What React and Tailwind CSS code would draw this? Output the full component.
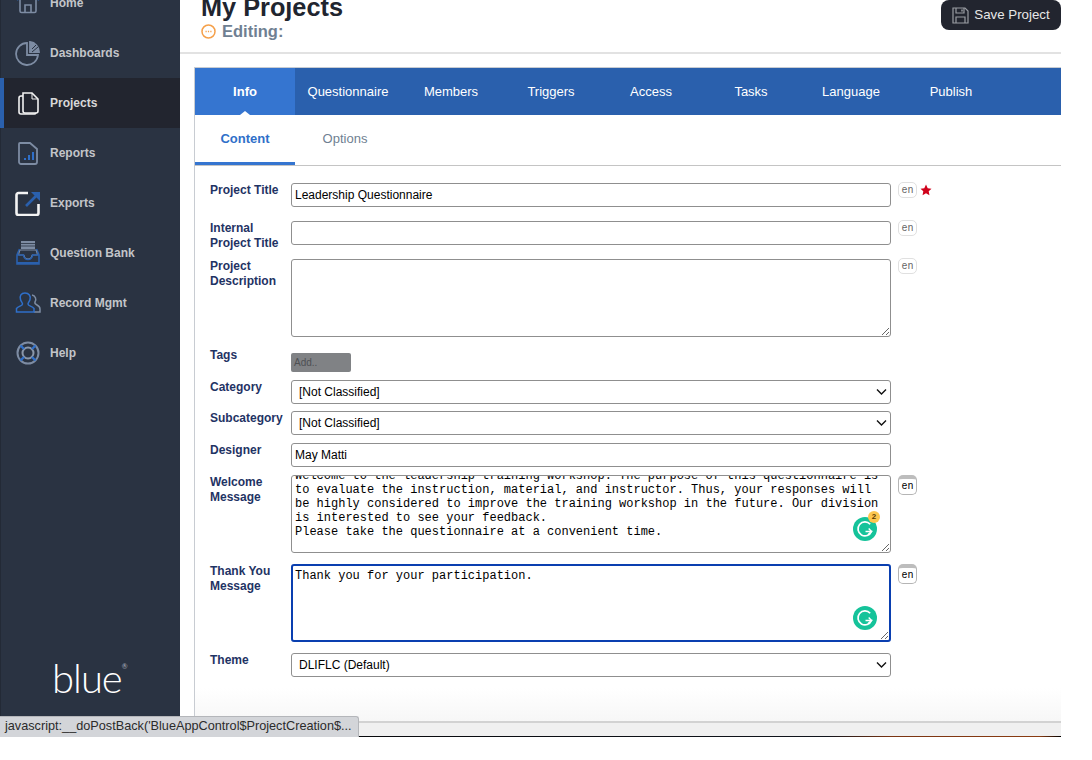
import React, { useEffect, useRef } from "react";

const sans = "font-['Liberation_Sans',Arial,sans-serif]";

const HomeIcon = () => (
  <svg width="26" height="26" viewBox="0 0 26 26" fill="none" strokeWidth="1.6">
    <path d="M2 10 13 1l11 9" stroke="#2a60ad" strokeWidth="2" />
    <path d="M5 8v13a1.500 1.500 0 0 0 1.500 1.500h13A1.500 1.500 0 0 0 21 21V8" stroke="#7d8ca3" />
    <path d="M10 22v-7h6v7" stroke="#7d8ca3" />
  </svg>
);

const DashIcon = () => (
  <svg width="26" height="26" viewBox="0 0 26 26" fill="none" stroke="#7d8ca3" strokeWidth="1.8">
    <path d="M12 3a11 11 0 1 0 11 12H12z" />
    <path d="M15 2a10 10 0 0 1 9 10h-9z" fill="#7d8ca3" />
    <path d="m17 9 4-4M17 12l6-5" stroke="#2a3342" strokeWidth="1" />
  </svg>
);

const ProjectsIcon = () => (
  <svg width="26" height="26" viewBox="0 0 26 26" fill="none" stroke="#f2f2f2" strokeWidth="1.6">
    <path d="M8 3h9l6 6v12a2 2 0 0 1-2 2H10a2 2 0 0 1-2-2z" />
    <path d="M8 6H6a2 2 0 0 0-2 2v14a2 2 0 0 0 2 2h13a2 2 0 0 0 2-1" />
    <path d="M17 3v6h6" strokeWidth="1" />
  </svg>
);

const ReportsIcon = () => (
  <svg width="26" height="26" viewBox="0 0 26 26" fill="none">
    <path d="M5 3h10l7 6v13a2 2 0 0 1-2 2H6a2 2 0 0 1-2-2V4a1 1 0 0 1 1-1z" stroke="#7d8ca3" strokeWidth="1.8" />
    <path d="M9 20h2v-2H9zM13 20h2v-5h-2zM17 20h2v-8h-2z" fill="#2f6fc9" />
  </svg>
);

const ExportsIcon = () => (
  <svg width="26" height="26" viewBox="0 0 26 26" fill="none">
    <path d="M13 3H3.500a2 2 0 0 0-2 2v18a2 2 0 0 0 2 2h18a2 2 0 0 0 2-2V14" stroke="#f4f4f4" strokeWidth="2.600" />
    <path d="m11 16 10-10" stroke="#2a60ad" strokeWidth="2.600" />
    <path d="M16 2h9v9z" fill="#2a60ad" />
  </svg>
);

const BankIcon = () => (
  <svg width="26" height="26" viewBox="0 0 26 26" fill="none">
    <path d="M6 1h14v8H6z" fill="#7d8ca3" />
    <path d="M6 3.500h14M6 6h14" stroke="#2a3342" strokeWidth="0.800" />
    <path d="M4.500 9 2 15v9h22v-9l-2.500-6" stroke="#2a60ad" strokeWidth="1.600" />
    <path d="M5 10h16l1.500 5H17a4 4 0 0 1-8 0H3.500z" fill="#2a3342" stroke="#7d8ca3" strokeWidth="1" />
    <path d="M2 15h6.500a4.500 4.500 0 0 0 9 0H24" stroke="#2a60ad" strokeWidth="1.600" />
    <path d="M2 22h22v2H2z" fill="#2a60ad" />
  </svg>
);

const RecordIcon = () => (
  <svg width="26" height="22" viewBox="0 0 26 22" fill="none" strokeWidth="1.500">
    <path d="M17 3a4.500 4.500 0 0 1 3 7c-.6 1.500 0 2 2 3 2 1 3 2 3 4v3h-6" stroke="#7d8ca3" />
    <path d="M10 1c4 0 6 3 5 6.500-.4 2-2 3-2 4.500 0 2 4 2 6 4.500V20H1.500v-3.500c2-2.500 6-2.500 6-4.500 0-1.500-1.600-2.500-2-4.500C4.500 4 6 1 10 1z" stroke="#2f6fc9" />
  </svg>
);

const HelpIcon = () => (
  <svg width="26" height="26" viewBox="0 0 26 26" fill="none">
    <circle cx="13" cy="13" r="10.500" stroke="#7d8ca3" strokeWidth="2" />
    <circle cx="13" cy="13" r="5.500" stroke="#8b98ab" strokeWidth="2" />
    <path d="m5.500 5.500 3.500 3.500M20.500 5.500 17 9M5.500 20.500 9 17M20.500 20.500 17 17" stroke="#2f6fc9" strokeWidth="2.400" />
  </svg>
);

const navItems = [
  { label: "Home", icon: HomeIcon },
  { label: "Dashboards", icon: DashIcon },
  { label: "Projects", icon: ProjectsIcon, active: true },
  { label: "Reports", icon: ReportsIcon },
  { label: "Exports", icon: ExportsIcon },
  { label: "Question Bank", icon: BankIcon },
  { label: "Record Mgmt", icon: RecordIcon },
  { label: "Help", icon: HelpIcon },
];

const tabs = [
  { label: "Info", width: "w-[100px]", active: true },
  { label: "Questionnaire", width: "w-[106px]" },
  { label: "Members", width: "w-[100px]" },
  { label: "Triggers", width: "w-[100px]" },
  { label: "Access", width: "w-[100px]" },
  { label: "Tasks", width: "w-[100px]" },
  { label: "Language", width: "w-[100px]" },
  { label: "Publish", width: "w-[100px]" },
];

const fieldClass =
  "block w-[600px] h-6 rounded-[3px] border border-[#8f8f8f] bg-white px-[3px] text-xs text-black outline-none";

const Sidebar = () => (
  <aside className="flex w-[180px] shrink-0 flex-col overflow-hidden bg-[#2a3342] shadow-[inset_1px_0_0_#232a36]">
    <nav className="-mt-[22px]">
      {navItems.map((item) => (
        <div
          key={item.label}
          className={
            item.active
              ? "flex h-[50px] items-center border-l-4 border-[#2a60ad] bg-[#22252f] pl-[11px]"
              : "flex h-[50px] items-center pl-[15px]"
          }
        >
          <span className="flex w-[35px] shrink-0">
            <item.icon />
          </span>
          <span className={item.active ? "text-xs font-bold text-[#d8d8d8]" : "text-xs font-bold text-[#c3c5c9]"}>
            {item.label}
          </span>
        </div>
      ))}
    </nav>
    <div className="mt-[276px] flex items-start pl-[52px] font-['Lato',sans-serif] text-[40px] leading-[48px] font-light tracking-[-1px] text-white">
      blue
      <span className="mt-[9px] text-[7px] leading-none font-normal text-[#aab0ba]">®</span>
    </div>
  </aside>
);

const LangBadge = ({ strong }) =>
  strong ? (
    <span className="ml-[7px] flex h-5 w-[19px] items-center justify-center rounded-[5px] border border-[#b5b5b5] border-t-[4px] border-t-[#bdbdbd] bg-white font-['Liberation_Mono',monospace] text-[10px] text-black">
      en
    </span>
  ) : (
    <span className="-mt-[1px] ml-[7px] flex h-4 w-[19px] items-center justify-center rounded-[5px] border border-[#e0e0e0] bg-white font-['Liberation_Mono',monospace] text-[10px] text-[#666]">
      en
    </span>
  );

const Row = ({ label, className, labelClass = "h-6", children }) => (
  <div className={`flex ${className}`}>
    <label className={`w-[81px] shrink-0 text-xs leading-[14.5px] font-bold text-[#1f3364] ${labelClass}`}>
      {label}
    </label>
    {children}
  </div>
);

const Chevron = () => (
  <svg
    className="pointer-events-none absolute top-[8px] right-[4px]"
    width="11"
    height="8"
    viewBox="0 0 11 8"
    fill="none"
    stroke="#111"
    strokeWidth="1.400"
  >
    <path d="m1 1.500 4.500 4.500L10 1.500" />
  </svg>
);

const SelectField = ({ value }) => (
  <div className="relative w-[600px]">
    <select className={`${fieldClass} appearance-none pl-[7px]`} defaultValue={value}>
      <option>{value}</option>
    </select>
    <Chevron />
  </div>
);

const GrammarlyBadge = ({ count }) => (
  <div className="pointer-events-none absolute right-[14px] bottom-[12px] h-6 w-6">
    <svg width="24" height="24" viewBox="0 0 24 24" fill="none">
      <circle cx="12" cy="12" r="12" fill="#15c39a" />
      <path d="M17.200 7.200A7 7 0 1 0 18.500 14.500H12.500" stroke="#fff" strokeWidth="1.700" />
      <path d="m15.200 17.500 3.300-3-2.800-3" stroke="#fff" strokeWidth="1.400" />
    </svg>
    {count && (
      <span className="absolute -top-[6px] -right-[3px] flex h-3 w-3 items-center justify-center rounded-full bg-[#fdc74f] text-[8px] font-bold text-[#5b3a00]">
        {count}
      </span>
    )}
  </div>
);

const welcomeText = `Welcome to the leadership training workshop. The purpose of this questionnaire is to evaluate the instruction, material, and instructor. Thus, your responses will be highly considered to improve the training workshop in the future. Our division is interested to see your feedback.
Please take the questionnaire at a convenient time.


`;

const Area = ({ value, focused, scrollTo, count, grammarly, height = "h-[78px]" }) => {
  const ref = useRef(null);
  useEffect(() => {
    if (scrollTo) ref.current.scrollTop = scrollTo;
  }, [scrollTo]);
  return (
    <div className={`relative w-[600px] ${height}`}>
      <textarea
        ref={ref}
        defaultValue={value}
        className={
          focused
            ? "block h-full w-full resize-y overflow-hidden rounded-[3px] border-2 border-[#0a3fb0] bg-white px-[2px] py-[3px] font-['Liberation_Mono',monospace] text-xs leading-[14px] text-black outline-none"
            : "block h-full w-full resize-y overflow-hidden rounded-[3px] border border-[#8f8f8f] bg-white px-[3px] py-[3px] font-['Liberation_Mono',monospace] text-xs leading-[14px] text-black outline-none"
        }
      />
      {grammarly && <GrammarlyBadge count={count} />}
    </div>
  );
};

const ProjectForm = () => (
  <div className="pt-[17px] pl-[15px]">
    <Row label="Project Title">
      <input className={fieldClass} defaultValue="Leadership Questionnaire" />
      <LangBadge />
      <svg className="mt-[1px] ml-[3px]" width="12" height="12" viewBox="0 0 24 24" fill="#d0021b">
        <path d="m12 1 3.400 7.400 7.600.9-5.600 5.300 1.500 8L12 18.600l-6.900 4 1.500-8L1 9.300l7.600-.9z" />
      </svg>
    </Row>
    <Row label="Internal Project Title" className="mt-[14px]">
      <input className={fieldClass} />
      <LangBadge />
    </Row>
    <Row label="Project Description" className="mt-[14px]">
      <Area value="" />
      <LangBadge />
    </Row>
    <Row label="Tags" labelClass="-mt-[5px]" className="mt-[16px] h-[19px] items-start">
      <div className="h-[19px] w-[60px] rounded-[2px] bg-[#808285] pt-[4px] pl-[3px] text-[10px] leading-3 text-[#4e5054]">
        Add..
      </div>
    </Row>
    <Row label="Category" className="mt-[8px]">
      <SelectField value="[Not Classified]" />
    </Row>
    <Row label="Subcategory" className="mt-[7px]">
      <SelectField value="[Not Classified]" />
    </Row>
    <Row label="Designer" className="mt-[8px]">
      <input className={fieldClass} defaultValue="May Matti" />
    </Row>
    <Row label="Welcome Message" className="mt-[8px]">
      <Area value={welcomeText} scrollTo={10} grammarly count="2" />
      <LangBadge strong />
    </Row>
    <Row label="Thank You Message" className="mt-[11px]">
      <Area value="Thank you for your participation." focused grammarly />
      <LangBadge strong />
    </Row>
    <Row label="Theme" className="mt-[11px]">
      <SelectField value="DLIFLC (Default)" />
    </Row>
  </div>
);

const App = () => (
  <div className={`h-[760px] w-[1092px] overflow-hidden bg-white ${sans}`}>
    <div className="relative flex h-[737px] w-[1061px] flex-col overflow-hidden">
      <div className="flex min-h-0 flex-1">
        <Sidebar />
        <main className="flex min-w-0 flex-1 flex-col">
          <header className="flex h-[54px] shrink-0 justify-between border-b-2 border-[#e2e2e2] pl-[21px]">
            <div>
              <h1 className="-mt-[8px] text-[25.300px] leading-[30px] font-bold text-[#21252f]">My Projects</h1>
              <div className="flex items-center gap-[6px] text-[16.500px] leading-[18px] font-bold text-[#6f7f92]">
                <svg width="15" height="15" viewBox="0 0 15 15" fill="none">
                  <circle cx="7.500" cy="7.500" r="6.500" stroke="#f5a04a" strokeWidth="1.500" />
                  <path d="M4.500 7.500h6" stroke="#f5a04a" strokeWidth="1.500" strokeDasharray="1.200 1.200" />
                </svg>
                Editing:
              </div>
            </div>
            <button className="flex h-[30px] w-[120px] items-center justify-center gap-[5px] rounded-lg bg-[#22252f] text-[13.300px] text-[#e8e8e8]">
              <svg width="17" height="17" viewBox="0 0 17 17" fill="none" stroke="#9a9da3" strokeWidth="1.200">
                <path d="M1 1h12l3 3v12H1z" />
                <path d="M4 1v5h8V1M4 16v-6h9v6" />
                <path d="M10 2.500v2" strokeWidth="1.500" />
              </svg>
              Save Project
            </button>
          </header>
          <section className="mt-[13px] ml-[14px] flex min-h-0 flex-1 flex-col border-t border-l border-[#c8ccd2] bg-[linear-gradient(#fff_0,#fff_620px,#f7f7f7_100%)]">
            <div className="flex h-[47px] shrink-0 bg-[#2a60ad]">
              {tabs.map((tab) => (
                <div
                  key={tab.label}
                  className={
                    tab.active
                      ? `relative flex h-full items-center justify-center bg-[#3575d0] text-[13px] font-bold text-white ${tab.width}`
                      : `flex h-full items-center justify-center text-[13px] text-white ${tab.width}`
                  }
                >
                  {tab.label}
                  {tab.active && (
                    <span className="absolute bottom-0 left-1/2 -ml-[5px] border-x-[5px] border-b-[4px] border-x-transparent border-b-white" />
                  )}
                </div>
              ))}
            </div>
            <div className="flex h-[51px] shrink-0 border-b border-[#c4c4c4]">
              <div className="flex h-[50px] w-[100px] items-center justify-center border-b-[3px] border-[#3575d0] text-[13px] font-bold text-[#2f6fc9]">
                Content
              </div>
              <div className="flex h-[50px] w-[100px] items-center justify-center border-b-[3px] border-transparent text-[13px] text-[#6f7f92]">
                Options
              </div>
            </div>
            <ProjectForm />
          </section>
          <div className="h-[15px] shrink-0 border-t-2 border-[#d2d2d2] bg-[#f0f0f0]" />
        </main>
      </div>
      <div className="h-px shrink-0 bg-[linear-gradient(90deg,#000_0,#10141c_78%,#7a3412_84%,#8a3c12_98%,#000_100%)]" />
      <div className="absolute bottom-0 left-0 flex h-[21px] w-[359px] items-center rounded-tr-[3px] border-t border-r border-[#b4b6ba] bg-[#d3d5d9] pl-[5px] text-[12.700px] whitespace-nowrap text-[#2b2b2b]">
        javascript:__doPostBack('BlueAppControl$ProjectCreation$...
      </div>
    </div>
  </div>
);

export default App;
